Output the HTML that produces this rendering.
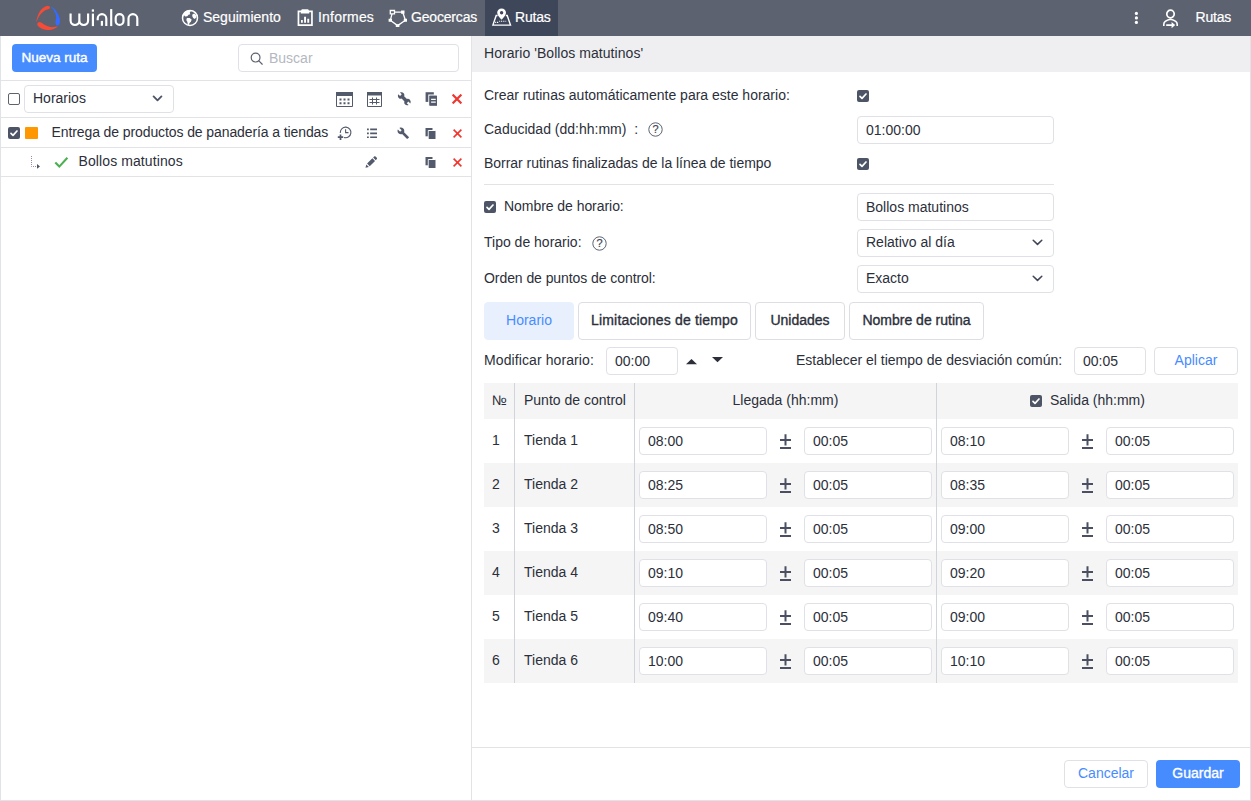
<!DOCTYPE html>
<html lang="es">
<head>
<meta charset="utf-8">
<title>Wialon - Rutas</title>
<style>
*{box-sizing:border-box;margin:0;padding:0}
html,body{width:1251px;height:801px;overflow:hidden;background:#fff}
body{font-family:"Liberation Sans",sans-serif;font-size:14px;color:#2c2f3a;position:relative}
.abs{position:absolute}
#topbar{position:absolute;left:0;top:0;width:1251px;height:36px;background:#5c6270}
#topbar .nav{position:absolute;top:0;height:36px;color:#fff;font-size:14px;line-height:34px;white-space:nowrap;-webkit-text-stroke:.2px #fff}
#topbar .active{position:absolute;left:485px;top:0;width:73px;height:36px;background:#3e465a}
#left{position:absolute;left:0;top:36px;width:472px;height:765px;border-left:1px solid #e1e3e6;border-right:1px solid #e1e3e6;border-bottom:1px solid #e1e3e6;background:#fff}
#right{position:absolute;left:472px;top:36px;width:779px;height:765px;border-right:1px solid #e1e3e6;border-bottom:1px solid #e1e3e6;background:#fff}
.hline{position:absolute;height:1px;background:#e1e3e6}
.vline{position:absolute;width:1px;background:#cfd5da}
.t{position:absolute;white-space:nowrap;line-height:16px;font-size:14px;color:#2c2f3a}
.inp{position:absolute;height:28px;border:1px solid #dfe1e6;border-radius:4px;background:#fff;font-size:14px;line-height:26px;padding-left:8px;color:#2c2f3a;white-space:nowrap}
.btn{position:absolute;height:28px;border-radius:4px;font-size:14px;line-height:26px;text-align:center;white-space:nowrap}
.btn.primary{background:#478cff;color:#fff}
.btn.ghost{border:1px solid #dfe1e6;color:#478cff;line-height:24px;background:#fff}
.cb{position:absolute;width:12px;height:12px;border-radius:2px;background:#4d5466}
.cb svg{position:absolute;left:0;top:0}
.cb.off{background:#fff;border:1px solid #5c6270}
.tab{position:absolute;top:302px;height:38px;border:1px solid #dcdee3;border-radius:4px;font-size:14px;line-height:34px;text-align:center;color:#2c2f3a;white-space:nowrap}
.tab.sel{background:#e8f0fe;border-color:#e8f0fe;color:#478cff}
.row{position:absolute;left:484px;width:754px;height:44px}
.row.g{background:#f5f5f5}
.med{-webkit-text-stroke:.35px currentColor}
.pm{position:absolute;font-size:18px;line-height:20px;color:#4d5466}
svg{display:block}
.ico{position:absolute}
</style>
</head>
<body>
<div id="left">
  <div class="btn primary" style="left:11px;top:8px;width:85px;font-size:13.500px;-webkit-text-stroke:.4px #fff;line-height:27px">Nueva ruta</div>
  <div class="inp" style="left:237px;top:8px;width:221px"></div>
  <svg class="ico" style="left:248.500px;top:15.500px" width="14" height="14" viewBox="0 0 15 15" fill="none" stroke="#5c6270" stroke-width="1.300" stroke-linecap="round"><circle cx="6" cy="6" r="4.700"/><path d="M9.500 9.500l3.600 3.600"/></svg>
  <div class="t" style="left:268px;top:14px;color:#b4b8c0">Buscar</div>
  <div class="hline" style="left:0;top:44px;width:470px"></div>
  <!-- row 1 -->
  <div class="cb off" style="left:7px;top:57px"></div>
  <div class="inp" style="left:23px;top:49px;width:150px;line-height:24px">Horarios</div>
  <svg class="ico" style="left:150.500px;top:59px" width="11" height="7.300" viewBox="0 0 12 8" fill="none" stroke="#4d5466" stroke-width="2" stroke-linecap="round" stroke-linejoin="round"><path d="M1.700 1.600L6 5.800 10.300 1.600"/></svg>
  <div class="hline" style="left:0;top:81px;width:470px"></div>
  <!-- row 2 -->
  <div class="cb" style="left:7px;top:91px"><svg width="12" height="12" viewBox="0 0 12 12" fill="none" stroke="#fff" stroke-width="1.700" stroke-linecap="round" stroke-linejoin="round"><path d="M3.000 6.300l2.000 2.000 4.000-4.300"/></svg></div>
  <div class="abs" style="left:24px;top:91px;width:13px;height:12px;background:#ff9800;border-radius:1px"></div>
  <div class="t" style="left:50.500px;top:88px;letter-spacing:-.1px">Entrega de productos de panadería a tiendas</div>
  <div class="hline" style="left:0;top:111px;width:470px"></div>
  <!-- row 3 -->
  <svg class="ico" style="left:29px;top:119px" width="11" height="14" viewBox="0 0 11 14"><path d="M1.500 1v10.500h6" fill="none" stroke="#9a8aa8" stroke-width="1" stroke-dasharray="1 1"/><path d="M7.000 9.000l3.000 2.400-3.000 2.400z" fill="#4d5466"/></svg>
  <svg class="ico" style="left:53px;top:120px" width="15" height="13" viewBox="0 0 15 13" fill="none" stroke="#4caf50" stroke-width="2.100" stroke-linejoin="miter"><path d="M1.300 6.600l4.000 4.000L13.400 1.800"/></svg>
  <div class="t" style="left:77.500px;top:117px;letter-spacing:.1px">Bollos matutinos</div>

  <!-- row1 icons -->
  <svg class="ico" style="left:335px;top:56px" width="17" height="15" viewBox="0 0 17 15"><path d="M.5.500h16v14H.5z" fill="#fff" stroke="#535a6b" stroke-width="1"/><path d="M0 0h17v4H0z" fill="#535a6b"/><path d="M3.500 6.500h2v2h-2zM7.500 6.500h2v2h-2zM11.500 6.500h2v2h-2zM3.500 10.300h2v2h-2zM7.500 10.300h2v2h-2zM11.500 10.300h2v2h-2z" fill="#535a6b"/></svg>
  <svg class="ico" style="left:366px;top:56px" width="15" height="15" viewBox="0 0 15 15"><path d="M.5.500h14v14H.5z" fill="#fff" stroke="#535a6b" stroke-width="1"/><path d="M0 0h15v3.500H0z" fill="#535a6b"/><path d="M2.500 7.500h10M2.500 10.500h10M5.500 5.500v7M9.500 5.500v7" stroke="#535a6b" stroke-width="1" fill="none"/></svg>
  <svg class="ico" style="left:395.500px;top:55px" width="14.500" height="15" viewBox="0 0 15 15"><path d="M1.200 3.000l2.000 1.800 1.700-1.600L3.100 1.300c1.300-.7 2.900-.4 3.800.7.800.9.900 2.100.5 3.100l2.900 2.900c1.000-.4 2.200-.2 3.000.7 1.000 1.100 1.100 2.700.4 3.900l-1.900-1.900-1.700 1.600 1.900 1.900c-1.300.6-2.900.4-3.800-.7-.7-.9-.9-2.000-.5-3.000L4.800 7.600c-1.000.4-2.200.2-3.000-.7-.9-1.000-1.100-2.600-.6-3.900z" fill="#535a6b"/></svg>
  <svg class="ico" style="left:423.500px;top:56px" width="12.600" height="14" viewBox="0 0 13 14"><path d="M.6 0h8.500v10H.6z" fill="#535a6b"/><path d="M4.000 3.000h8.500V14H4.000z" fill="#535a6b" stroke="#fff" stroke-width="1.200"/><path d="M4.600 3.600H13V14H4.600z" fill="#535a6b"/><path d="M6.300 7.300h4.800M6.300 10.300h4.800" stroke="#fff" stroke-width="1.300"/></svg>
  <svg class="ico" style="left:451px;top:58px" width="10" height="10" viewBox="0 0 10 10" stroke="#f1352f" stroke-width="2.2" fill="none"><path d="M.6.600l8.8 8.8M9.4 .6L.6 9.4"/></svg>
  <!-- row2 icons -->
  <svg class="ico" style="left:336px;top:89px" width="15" height="16" viewBox="0 0 15 16"><path d="M3.300 7.400a5.300 5.300 0 1 1 4.200 5.200" fill="none" stroke="#535a6b" stroke-width="1.100" stroke-linecap="round"/><path d="M8.600 4.200v3.400h2.900" fill="none" stroke="#535a6b" stroke-width="1.100"/><path d="M3.500 9.500v5.400M.8 12.200h5.400" stroke="#535a6b" stroke-width="1.700"/></svg>
  <svg class="ico" style="left:365.500px;top:91.800px" width="10.800" height="10.600" viewBox="0 0 12 10.600" preserveAspectRatio="none" fill="#535a6b"><path d="M0 .4h2v1.800H0zM3.500.400H12v1.800H3.500zM0 4.400h2v1.800H0zM3.500 4.400H12v1.800H3.500zM0 8.400h2v1.800H0zM3.500 8.400H12v1.800H3.500z"/></svg>
  <svg class="ico" style="left:395.500px;top:91px" width="12.500" height="12.500" viewBox="0 0 24 24"><path d="M22.700 19.000l-9.100-9.100c.9-2.300.4-5.000-1.500-6.900-2.000-2.000-5.000-2.400-7.400-1.300L9.000 6.000 6.000 9.000 1.600 4.700C.4 7.100.9 10.100 2.900 12.100c1.900 1.900 4.600 2.400 6.900 1.500l9.100 9.100c.4.400 1.000.4 1.400 0l2.300-2.300c.5-.4.500-1.100.1-1.400z" fill="#535a6b"/></svg>
  <svg class="ico" style="left:424px;top:92px" width="11" height="11" viewBox="0 0 11 11"><path d="M.5 0h7v8.300h-7z" fill="#535a6b"/><path d="M3.300 2.500h7.200V11H3.300z" fill="#535a6b" stroke="#fff" stroke-width="1"/><path d="M3.800 3.000h6.700v8H3.800z" fill="#535a6b"/></svg>
  <svg class="ico" style="left:452px;top:92.700px" width="9" height="9" viewBox="0 0 9 9" stroke="#f1352f" stroke-width="1.6" fill="none"><path d="M.6.600l7.8 7.8M8.4 .6L.6 8.4"/></svg>
  <!-- row3 icons -->
  <svg class="ico" style="left:364.300px;top:120px" width="12.300" height="12.300" viewBox="0 0 13 13" fill="#535a6b"><path d="M.5 12.500l.9-3.600 2.700 2.700zM2.200 8.000l5.600-5.600 2.800 2.800-5.600 5.600zM8.600 1.600L9.700.5c.4-.4 1.000-.4 1.400 0l1.400 1.400c.4.400.4 1.000 0 1.400l-1.100 1.100z"/></svg>
  <svg class="ico" style="left:424px;top:121px" width="11" height="11" viewBox="0 0 11 11"><path d="M.5 0h7v8.300h-7z" fill="#535a6b"/><path d="M3.300 2.500h7.200V11H3.300z" fill="#535a6b" stroke="#fff" stroke-width="1"/><path d="M3.800 3.000h6.700v8H3.800z" fill="#535a6b"/></svg>
  <svg class="ico" style="left:452px;top:121.700px" width="9" height="9" viewBox="0 0 9 9" stroke="#f1352f" stroke-width="1.6" fill="none"><path d="M.6.600l7.8 7.8M8.4 .6L.6 8.4"/></svg>
  <div class="hline" style="left:0;top:140px;width:470px"></div>
</div>
<div id="right"></div>
<div id="rp" style="position:absolute;left:0;top:0;width:1251px;height:801px">
  <div class="abs" style="left:472px;top:36px;width:778px;height:36px;background:#efeff1"></div>
  <div class="t" style="left:484px;top:45px;letter-spacing:.05px">Horario 'Bollos matutinos'</div>
  <div class="t" style="left:484px;top:87px">Crear rutinas automáticamente para este horario:</div>
  <div class="cb" style="left:857px;top:90px"><svg width="12" height="12" viewBox="0 0 12 12" fill="none" stroke="#fff" stroke-width="1.700" stroke-linecap="round" stroke-linejoin="round"><path d="M3.000 6.300l2.000 2.000 4.000-4.300"/></svg></div>
  <div class="t" style="left:484px;top:121px">Caducidad (dd:hh:mm)&nbsp; :</div>
  <svg class="ico" style="left:648px;top:122.300px" width="15" height="15" viewBox="0 0 15 15"><circle cx="7.500" cy="7.500" r="6.700" fill="none" stroke="#5c6270" stroke-width="1"/><text x="7.500" y="11.200" font-family="Liberation Sans" font-size="11" fill="#3f4556" stroke="#3f4556" stroke-width=".2" text-anchor="middle">?</text></svg>
  <div class="inp" style="left:857px;top:116px;width:197px">01:00:00</div>
  <div class="t" style="left:484px;top:155px;letter-spacing:-.03px">Borrar rutinas finalizadas de la línea de tiempo</div>
  <div class="cb" style="left:857px;top:158px"><svg width="12" height="12" viewBox="0 0 12 12" fill="none" stroke="#fff" stroke-width="1.700" stroke-linecap="round" stroke-linejoin="round"><path d="M3.000 6.300l2.000 2.000 4.000-4.300"/></svg></div>
  <div class="hline" style="left:484px;top:184px;width:570px"></div>
  <div class="cb" style="left:484px;top:201px"><svg width="12" height="12" viewBox="0 0 12 12" fill="none" stroke="#fff" stroke-width="1.700" stroke-linecap="round" stroke-linejoin="round"><path d="M3.000 6.300l2.000 2.000 4.000-4.300"/></svg></div>
  <div class="t" style="left:504px;top:198px;letter-spacing:-.05px">Nombre de horario:</div>
  <div class="inp" style="left:857px;top:193px;width:197px">Bollos matutinos</div>
  <div class="t" style="left:484px;top:234px">Tipo de horario:</div>
  <svg class="ico" style="left:592px;top:235.500px" width="15" height="15" viewBox="0 0 15 15"><circle cx="7.500" cy="7.500" r="6.700" fill="none" stroke="#5c6270" stroke-width="1"/><text x="7.500" y="11.200" font-family="Liberation Sans" font-size="11" fill="#3f4556" stroke="#3f4556" stroke-width=".2" text-anchor="middle">?</text></svg>
  <div class="inp" style="left:857px;top:229px;width:197px;line-height:24px">Relativo al día</div>
  <svg class="ico" style="left:1031.500px;top:239.300px" width="11" height="7" viewBox="0 0 11 7" fill="none" stroke="#3f4556" stroke-width="1.500" stroke-linecap="round" stroke-linejoin="round"><path d="M1.200 1.200L5.500 5.400 9.800 1.200"/></svg>
  <div class="t" style="left:484px;top:270px;letter-spacing:-.07px">Orden de puntos de control:</div>
  <div class="inp" style="left:857px;top:265px;width:197px;line-height:24px">Exacto</div>
  <svg class="ico" style="left:1031.500px;top:275.300px" width="11" height="7" viewBox="0 0 11 7" fill="none" stroke="#3f4556" stroke-width="1.500" stroke-linecap="round" stroke-linejoin="round"><path d="M1.200 1.200L5.500 5.400 9.800 1.200"/></svg>
  <!-- tabs -->
  <div class="tab sel" style="left:484px;width:90px">Horario</div>
  <div class="tab med" style="left:578px;width:173px;letter-spacing:.17px">Limitaciones de tiempo</div>
  <div class="tab med" style="left:755px;width:90px">Unidades</div>
  <div class="tab med" style="left:849px;width:135px">Nombre de rutina</div>
  <!-- modify row -->
  <div class="t" style="left:484px;top:352px;letter-spacing:.1px">Modificar horario:</div>
  <div class="inp" style="left:606px;top:347px;width:72px">00:00</div>
  <svg class="ico" style="left:686px;top:359.400px" width="11" height="5.200" viewBox="0 0 11 6" preserveAspectRatio="none"><path d="M0 6L5.500 0 11 6z" fill="#2c2f3a"/></svg>
  <svg class="ico" style="left:712px;top:357.400px" width="11" height="5.200" viewBox="0 0 11 6" preserveAspectRatio="none"><path d="M0 0L5.500 6 11 0z" fill="#2c2f3a"/></svg>
  <div class="t" style="left:796px;top:352px">Establecer el tiempo de desviación común:</div>
  <div class="inp" style="left:1074px;top:347px;width:72px">00:05</div>
  <div class="btn ghost" style="left:1154px;top:347px;width:84px">Aplicar</div>
  <!-- table -->
  <div class="abs" style="left:484px;top:383px;width:754px;height:36px;background:#f5f5f5"></div>
  <div class="t" style="left:492px;top:392px">№</div>
  <div class="t" style="left:524px;top:392px">Punto de control</div>
  <div class="t" style="left:635px;top:392px;width:301px;text-align:center">Llegada (hh:mm)</div>
  <div class="cb" style="left:1030px;top:395px"><svg width="12" height="12" viewBox="0 0 12 12" fill="none" stroke="#fff" stroke-width="1.700" stroke-linecap="round" stroke-linejoin="round"><path d="M3.000 6.300l2.000 2.000 4.000-4.300"/></svg></div>
  <div class="t" style="left:1050px;top:392px">Salida (hh:mm)</div>
  <div class="row" style="top:419px"></div>
  <div class="t" style="left:492px;top:432px">1</div>
  <div class="t" style="left:524px;top:432px">Tienda 1</div>
  <div class="inp" style="left:639px;top:427px;width:128px">08:00</div>
  <svg class="ico" style="left:780px;top:434px" width="11" height="15" viewBox="0 0 11 15" fill="#4a5061"><path d="M4.500.200h2v11.400h-2zM0 4.900h11v2H0zM0 13.100h11v2H0z"/></svg>
  <div class="inp" style="left:804px;top:427px;width:128px">00:05</div>
  <div class="inp" style="left:941px;top:427px;width:128px">08:10</div>
  <svg class="ico" style="left:1082px;top:434px" width="11" height="15" viewBox="0 0 11 15" fill="#4a5061"><path d="M4.500.200h2v11.400h-2zM0 4.900h11v2H0zM0 13.100h11v2H0z"/></svg>
  <div class="inp" style="left:1106px;top:427px;width:128px">00:05</div>
  <div class="row g" style="top:463px"></div>
  <div class="t" style="left:492px;top:476px">2</div>
  <div class="t" style="left:524px;top:476px">Tienda 2</div>
  <div class="inp" style="left:639px;top:471px;width:128px">08:25</div>
  <svg class="ico" style="left:780px;top:478px" width="11" height="15" viewBox="0 0 11 15" fill="#4a5061"><path d="M4.500.200h2v11.400h-2zM0 4.900h11v2H0zM0 13.100h11v2H0z"/></svg>
  <div class="inp" style="left:804px;top:471px;width:128px">00:05</div>
  <div class="inp" style="left:941px;top:471px;width:128px">08:35</div>
  <svg class="ico" style="left:1082px;top:478px" width="11" height="15" viewBox="0 0 11 15" fill="#4a5061"><path d="M4.500.200h2v11.400h-2zM0 4.900h11v2H0zM0 13.100h11v2H0z"/></svg>
  <div class="inp" style="left:1106px;top:471px;width:128px">00:05</div>
  <div class="row" style="top:507px"></div>
  <div class="t" style="left:492px;top:520px">3</div>
  <div class="t" style="left:524px;top:520px">Tienda 3</div>
  <div class="inp" style="left:639px;top:515px;width:128px">08:50</div>
  <svg class="ico" style="left:780px;top:522px" width="11" height="15" viewBox="0 0 11 15" fill="#4a5061"><path d="M4.500.200h2v11.400h-2zM0 4.900h11v2H0zM0 13.100h11v2H0z"/></svg>
  <div class="inp" style="left:804px;top:515px;width:128px">00:05</div>
  <div class="inp" style="left:941px;top:515px;width:128px">09:00</div>
  <svg class="ico" style="left:1082px;top:522px" width="11" height="15" viewBox="0 0 11 15" fill="#4a5061"><path d="M4.500.200h2v11.400h-2zM0 4.900h11v2H0zM0 13.100h11v2H0z"/></svg>
  <div class="inp" style="left:1106px;top:515px;width:128px">00:05</div>
  <div class="row g" style="top:551px"></div>
  <div class="t" style="left:492px;top:564px">4</div>
  <div class="t" style="left:524px;top:564px">Tienda 4</div>
  <div class="inp" style="left:639px;top:559px;width:128px">09:10</div>
  <svg class="ico" style="left:780px;top:566px" width="11" height="15" viewBox="0 0 11 15" fill="#4a5061"><path d="M4.500.200h2v11.400h-2zM0 4.900h11v2H0zM0 13.100h11v2H0z"/></svg>
  <div class="inp" style="left:804px;top:559px;width:128px">00:05</div>
  <div class="inp" style="left:941px;top:559px;width:128px">09:20</div>
  <svg class="ico" style="left:1082px;top:566px" width="11" height="15" viewBox="0 0 11 15" fill="#4a5061"><path d="M4.500.200h2v11.400h-2zM0 4.900h11v2H0zM0 13.100h11v2H0z"/></svg>
  <div class="inp" style="left:1106px;top:559px;width:128px">00:05</div>
  <div class="row" style="top:595px"></div>
  <div class="t" style="left:492px;top:608px">5</div>
  <div class="t" style="left:524px;top:608px">Tienda 5</div>
  <div class="inp" style="left:639px;top:603px;width:128px">09:40</div>
  <svg class="ico" style="left:780px;top:610px" width="11" height="15" viewBox="0 0 11 15" fill="#4a5061"><path d="M4.500.200h2v11.400h-2zM0 4.900h11v2H0zM0 13.100h11v2H0z"/></svg>
  <div class="inp" style="left:804px;top:603px;width:128px">00:05</div>
  <div class="inp" style="left:941px;top:603px;width:128px">09:00</div>
  <svg class="ico" style="left:1082px;top:610px" width="11" height="15" viewBox="0 0 11 15" fill="#4a5061"><path d="M4.500.200h2v11.400h-2zM0 4.900h11v2H0zM0 13.100h11v2H0z"/></svg>
  <div class="inp" style="left:1106px;top:603px;width:128px">00:05</div>
  <div class="row g" style="top:639px"></div>
  <div class="t" style="left:492px;top:652px">6</div>
  <div class="t" style="left:524px;top:652px">Tienda 6</div>
  <div class="inp" style="left:639px;top:647px;width:128px">10:00</div>
  <svg class="ico" style="left:780px;top:654px" width="11" height="15" viewBox="0 0 11 15" fill="#4a5061"><path d="M4.500.200h2v11.400h-2zM0 4.900h11v2H0zM0 13.100h11v2H0z"/></svg>
  <div class="inp" style="left:804px;top:647px;width:128px">00:05</div>
  <div class="inp" style="left:941px;top:647px;width:128px">10:10</div>
  <svg class="ico" style="left:1082px;top:654px" width="11" height="15" viewBox="0 0 11 15" fill="#4a5061"><path d="M4.500.200h2v11.400h-2zM0 4.900h11v2H0zM0 13.100h11v2H0z"/></svg>
  <div class="inp" style="left:1106px;top:647px;width:128px">00:05</div>
  <div class="vline" style="left:514px;top:383px;height:300px"></div>
  <div class="vline" style="left:634px;top:383px;height:300px"></div>
  <div class="vline" style="left:936px;top:383px;height:300px"></div>
  <!-- footer -->
  <div class="hline" style="left:472px;top:747px;width:778px"></div>
  <div class="btn ghost" style="left:1064px;top:760px;width:84px">Cancelar</div>
  <div class="btn primary med" style="left:1156px;top:760px;width:84px">Guardar</div>
</div>
<div id="topbar">
  <div class="active"></div>
  <!-- logo -->
  <svg class="ico" style="left:34px;top:4px" width="28" height="28" viewBox="0 0 28 28">
    <path d="M15.90 3.91Q16.14 3.19 15.66 2.59Q15.18 2.00 14.23 1.88Q13.27 1.76 11.83 2.24Q10.39 2.71 8.95 3.91Q7.51 5.11 6.31 6.79Q5.11 8.47 4.27 10.39Q3.43 12.31 2.95 14.47Q2.47 16.62 2.31 17.63Q2.14 18.64 2.91 16.91Q3.67 15.18 4.63 13.27Q5.59 11.35 6.79 9.91Q7.99 8.47 9.43 7.39Q10.87 6.31 12.31 5.83Q13.75 5.35 14.71 4.99Q15.66 4.63 15.90 3.91z" fill="#f54b37"/>
    <path d="M17.53 3.51Q16.05 1.90 17.53 2.79Q19.02 3.67 20.46 5.11Q21.90 6.55 23.10 8.47Q24.30 10.39 25.02 12.31Q25.74 14.23 25.90 15.90Q26.07 17.58 25.71 19.02Q25.35 20.46 24.54 21.18Q23.72 21.90 22.93 21.47Q22.14 21.04 21.66 19.79Q21.18 18.54 21.61 16.86Q22.04 15.18 22.09 13.51Q22.14 11.83 21.54 10.15Q20.94 8.47 19.98 6.79Q19.02 5.11 17.53 3.51z" fill="#356bff"/>
    <path d="M3.43 19.21Q3.10 19.98 3.39 20.94Q3.67 21.90 5.11 23.10Q6.55 24.30 8.47 25.02Q10.39 25.74 12.79 25.90Q15.18 26.07 17.10 25.71Q19.02 25.35 20.70 24.51Q22.38 23.67 23.27 22.95Q24.15 22.24 22.55 22.62Q20.94 23.00 19.02 23.12Q17.10 23.24 15.18 22.76Q13.27 22.28 11.59 21.37Q9.91 20.46 8.71 19.50Q7.51 18.54 6.55 18.18Q5.59 17.82 4.68 18.13Q3.77 18.45 3.43 19.21z" fill="#f54b37"/>
  </svg>
  <!-- wialon wordmark -->
  <svg class="ico" style="left:68px;top:8px" width="74" height="20" viewBox="0 0 74 20" fill="none" stroke="#fff" stroke-width="2.150">
    <path d="M2.600 5.600V12.600a4.375 4.375 0 0 0 8.750 0V5.600M11.350 12.600a4.375 4.375 0 0 0 8.750 0V5.600"/>
    <path d="M24.900 5.600V18.100"/><path d="M23.800 1.400h2.200v2.300h-2.200z" fill="#fff" stroke="none"/>
    <path d="M29.700 12.200V10.450a4.300 4.300 0 0 1 8.600 0V18.100"/><path d="M32.800 12.900h2.200v4.900h-2.200z" fill="#fff" stroke="none"/>
    <path d="M43.200 1.100V18.100"/>
    <path d="M47.700 10.050a3.900 3.900 0 0 1 7.800 0V13.050a3.900 3.900 0 0 1-7.800 0z"/>
    <path d="M60.500 18.100V10.550a4.400 4.400 0 0 1 8.800 0V18.100"/>
  </svg>
  <!-- Seguimiento -->
  <svg class="ico" style="left:181px;top:9px" width="18" height="18" viewBox="0 0 18 18">
    <circle cx="9" cy="8.900" r="7.500" fill="none" stroke="#fff" stroke-width="1.500"/>
    <path d="M2.400 5.000L4.200 2.600 7.200 1.600 9.800 2.000 8.700 3.700 9.300 5.200 7.500 5.700 6.300 7.200 4.200 7.400 3.000 6.300z" fill="#fff"/>
    <path d="M5.900 9.100l2.700-.2 2.100 1.500-.8 2.300-1.400 1.200-.5 2.100-1.200-.2-.4-2.900-1.100-1.800z" fill="#fff"/>
    <path d="M11.500 5.200l1.900-.7 1.500 1.700.4 2.300-1.600 1.600-1.500-1.200-1.000-1.900z" fill="#fff"/>
  </svg>
  <div class="nav" style="left:203px">Seguimiento</div>
  <!-- Informes -->
  <svg class="ico" style="left:297px;top:9px" width="16" height="17" viewBox="0 0 16 17">
    <path d="M1.450 2.450h13.500v13.700H1.450z" fill="none" stroke="#fff" stroke-width="1.700"/>
    <path d="M3.800 2.400L4.800.200h6.400l1.000 2.200v2.200H3.800z" fill="#fff"/>
    <path d="M4.000 11.000h1.800v2.800H4.000zM7.100 7.800h1.900v6.000H7.100zM10.300 9.800h1.900v4.000h-1.900z" fill="#fff"/>
  </svg>
  <div class="nav" style="left:318px;letter-spacing:.2px">Informes</div>
  <!-- Geocercas -->
  <svg class="ico" style="left:388px;top:9px" width="20" height="19" viewBox="0 0 20 19">
    <path d="M4.500 3.200L14.800 3.200 17.400 11.300 9.600 16.600 2.300 11.300z" fill="none" stroke="#fff" stroke-width="1.300" stroke-linejoin="round"/>
    <path d="M2.300 1.500h4.200v3.400h-4.200z" fill="#5c6270" stroke="#fff" stroke-width="1.300"/>
    <path d="M13.100 1.600h3.400v3.200h-3.400zM15.800 9.800h3.200v3.000h-3.200zM7.800 15.200h3.600v2.900H7.800zM.6 9.800h3.400v3.000H.6z" fill="#fff"/>
  </svg>
  <div class="nav" style="left:411px;letter-spacing:-.18px">Geocercas</div>
  <!-- Rutas -->
  <svg class="ico" style="left:491px;top:8px" width="22" height="19" viewBox="0 0 22 19">
    <path d="M6.600 7.500H5.200L1.900 17.100H19.500L16.200 7.500H14.800" fill="none" stroke="#fff" stroke-width="1.400" stroke-linejoin="miter"/>
    <path d="M10.600.400c-2.500 0-4.400 1.900-4.400 4.300 0 2.800 4.400 7.000 4.400 7.000s4.400-4.200 4.400-7.000c0-2.400-1.900-4.300-4.400-4.300z" fill="#fff"/>
    <circle cx="10.600" cy="4.800" r="1.700" fill="#3e465a"/>
    <path d="M4.200 14.400h3.800M8.200 13.200h7.400" stroke="#fff" stroke-width="1.100" stroke-dasharray="1 .8" fill="none"/>
  </svg>
  <div class="nav" style="left:515px;letter-spacing:-.2px">Rutas</div>
  <!-- right -->
  <svg class="ico" style="left:1134px;top:11px" width="5" height="14" viewBox="0 0 5 14" fill="#fff"><circle cx="2.400" cy="2.400" r="1.600"/><circle cx="2.400" cy="6.900" r="1.600"/><circle cx="2.400" cy="11.400" r="1.600"/></svg>
  <svg class="ico" style="left:1162px;top:9px" width="17" height="20" viewBox="0 0 17 20">
    <ellipse cx="8.500" cy="5.000" rx="3.700" ry="3.800" fill="none" stroke="#fff" stroke-width="1.700"/>
    <path d="M1.800 17.000V15.200C1.800 12.600 3.600 11.400 8.500 10.300 13.400 11.400 15.200 12.600 15.200 15.200V17.000" fill="none" stroke="#fff" stroke-width="1.600"/>
    <path d="M4.200 15.200h5.400v-2.200l3.600 3.100-3.600 3.100v-2.200H4.200z" fill="#fff"/>
  </svg>
  <div class="nav" style="left:1195.500px;letter-spacing:-.2px">Rutas</div>
</div>
</body>
</html>
